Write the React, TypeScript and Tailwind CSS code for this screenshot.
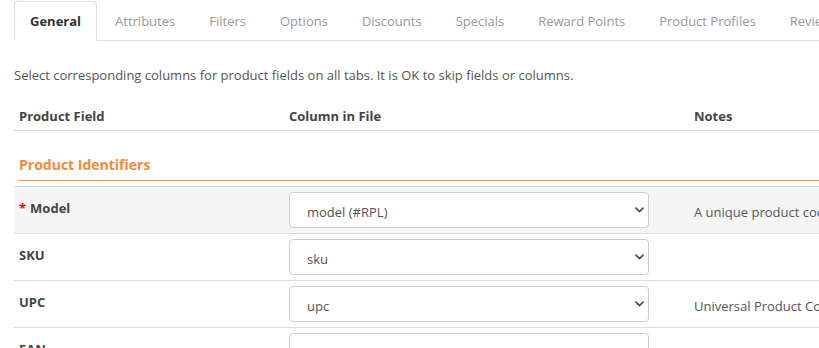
const tabs = ["General", "Attributes", "Filters", "Options", "Discounts", "Specials", "Reward Points", "Product Profiles", "Reviews", "SEO"]

const rows = [
  { label: "Model", required: true, value: "model (#RPL)", note: "A unique product code required by OpenCart" },
  { label: "SKU", required: false, value: "sku", note: "" },
  { label: "UPC", required: false, value: "upc", note: "Universal Product Code" },
  { label: "EAN", required: false, value: "ean", note: "European Article Number" },
]

function Chevron() {
  return (
    <svg width="9" height="6" viewBox="0 0 9 6" className="text-[#555]">
      <path d="M1 1.2l3.5 3.5 3.5-3.5" fill="none" stroke="currentColor" strokeWidth="1.8" strokeLinecap="round" strokeLinejoin="round" />
    </svg>
  )
}

export default function App() {
  return (
    <div className="w-[819px] h-[348px] overflow-hidden bg-white font-['Open_Sans',sans-serif] text-[13px] leading-[18px] text-[#555]">
      <div className="ml-[14px] w-[1100px]">
        {/* Onglets */}
        <div className="flex pt-[1px] border-b border-[#ddd]">
          {tabs.map((t, i) => (
            <div
              key={t}
              className={[
                "-mb-px mr-[2px] px-[15px] py-[10px] border rounded-t-[4px] whitespace-nowrap flex-shrink-0",
                i === 0
                  ? "border-[#ddd] border-b-white bg-white font-bold text-[#333]"
                  : "border-transparent text-[#999]",
              ].join(" ")}
            >
              {t}
            </div>
          ))}
        </div>

        <p className="mt-[25px] mb-[18px]">
          Select corresponding columns for product fields on all tabs. It is OK to skip fields or columns.
        </p>

        {/* En-tête du tableau */}
        <div className="grid grid-cols-[270px_405px_1fr] border-b border-[#ddd] font-bold text-[#444]">
          <div className="px-[5px] py-[5px]">Product Field</div>
          <div className="px-[5px] py-[5px]">Column in File</div>
          <div className="px-[5px] py-[5px]">Notes</div>
        </div>

        {/* Section */}
        <div className="px-[5px] pt-[24px] pb-[5px]">
          <div className="border-b border-[#f38a35] pb-[5px] text-[14px] leading-[20px] font-bold text-[#f38a35]">
            Product Identifiers
          </div>
        </div>

        {rows.map((r, i) => (
          <div
            key={r.label}
            className={[
              "grid grid-cols-[270px_405px_1fr] border-t border-[#ddd]",
              i === 0 ? "bg-[#f5f5f5]" : "bg-white",
            ].join(" ")}
          >
            <div className="px-[5px] pt-[12px] font-bold text-[#444]">
              {r.required && <span className="text-[#f00] mr-[4px]">*</span>}
              {r.label}
            </div>
            <div className="px-[5px] py-[5px]">
              <div className="w-[360px] h-[36px] flex items-center justify-between pl-[17px] pr-[4px] border border-[#ccc] rounded-[4px] bg-white text-[#555] pt-[3px]">
                <span>{r.value}</span>
                <span className="pb-[3px]"><Chevron /></span>
              </div>
            </div>
            <div className="px-[5px] flex items-center pt-[3px] whitespace-nowrap">{r.note}</div>
          </div>
        ))}
      </div>
    </div>
  )
}
